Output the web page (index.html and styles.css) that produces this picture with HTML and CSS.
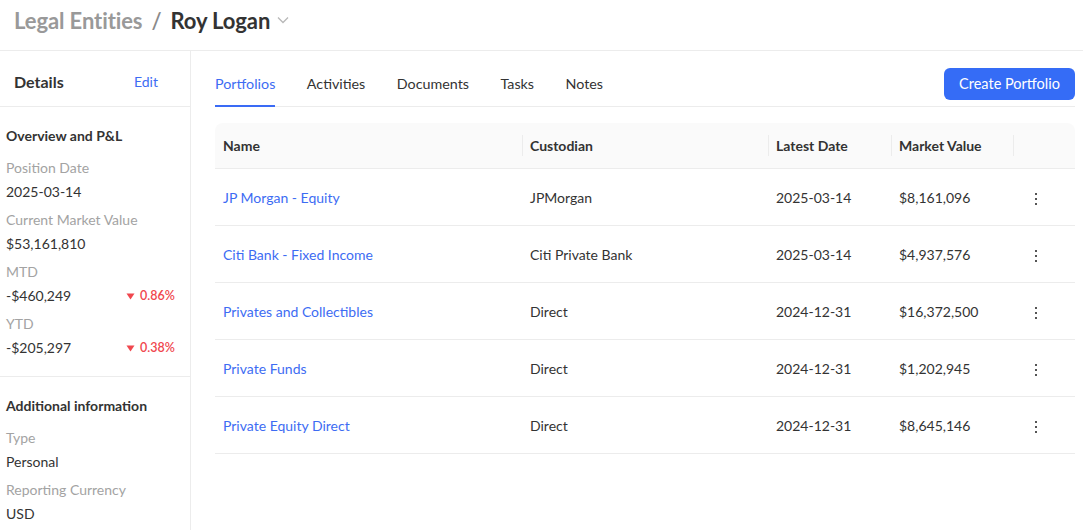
FILE: index.html
```html
<!DOCTYPE html>
<html lang="en">
<head>
<meta charset="utf-8">
<title>Roy Logan</title>
<link rel="stylesheet" href="styles.css">
</head>
<body>
<header class="topbar">
  <h1 class="crumbs">
    <span class="crumb-parent">Legal Entities</span>
    <span class="crumb-sep">/</span>
    <span class="crumb-current">Roy Logan</span>
    <svg class="crumb-chevron" width="14" height="14" viewBox="0 0 14 14"><path d="M2 4.5 L7 9.5 L12 4.5" fill="none" stroke="#b8b8b8" stroke-width="1.3"/></svg>
  </h1>
</header>
<div class="layout">
  <aside class="sidebar">
    <div class="side-head">
      <span class="side-title">Details</span>
      <a class="side-edit">Edit</a>
    </div>
    <section class="side-section">
      <h2 class="section-title">Overview and P&amp;L</h2>
      <div class="field">
        <div class="label">Position Date</div>
        <div class="value">2025-03-14</div>
      </div>
      <div class="field">
        <div class="label">Current Market Value</div>
        <div class="value">$53,161,810</div>
      </div>
      <div class="field">
        <div class="label">MTD</div>
        <div class="value split"><span>-$460,249</span><span class="change"><svg width="9" height="7" viewBox="0 0 9 7"><path d="M0.5 0.5 H8.5 L4.5 6.5 Z" fill="#f0474e"/></svg>0.86%</span></div>
      </div>
      <div class="field">
        <div class="label">YTD</div>
        <div class="value split"><span>-$205,297</span><span class="change"><svg width="9" height="7" viewBox="0 0 9 7"><path d="M0.5 0.5 H8.5 L4.5 6.5 Z" fill="#f0474e"/></svg>0.38%</span></div>
      </div>
    </section>
    <section class="side-section last">
      <h2 class="section-title">Additional information</h2>
      <div class="field">
        <div class="label">Type</div>
        <div class="value">Personal</div>
      </div>
      <div class="field">
        <div class="label">Reporting Currency</div>
        <div class="value">USD</div>
      </div>
    </section>
  </aside>
  <main class="main">
    <div class="tabbar">
      <nav class="tabs">
        <a class="tab active">Portfolios</a>
        <a class="tab">Activities</a>
        <a class="tab">Documents</a>
        <a class="tab">Tasks</a>
        <a class="tab">Notes</a>
      </nav>
      <button class="btn-primary">Create Portfolio</button>
    </div>
    <table class="grid">
      <colgroup>
        <col class="c-name"><col class="c-cust"><col class="c-date"><col class="c-mv"><col class="c-act">
      </colgroup>
      <thead>
        <tr>
          <th>Name</th>
          <th><span class="sep"></span>Custodian</th>
          <th><span class="sep"></span>Latest Date</th>
          <th><span class="sep"></span>Market Value</th>
          <th><span class="sep"></span></th>
        </tr>
      </thead>
      <tbody>
        <tr><td><a class="link">JP Morgan - Equity</a></td><td>JPMorgan</td><td>2025-03-14</td><td>$8,161,096</td><td class="act"><span class="dots"><i></i><i></i><i></i></span></td></tr>
        <tr><td><a class="link">Citi Bank - Fixed Income</a></td><td>Citi Private Bank</td><td>2025-03-14</td><td>$4,937,576</td><td class="act"><span class="dots"><i></i><i></i><i></i></span></td></tr>
        <tr><td><a class="link">Privates and Collectibles</a></td><td>Direct</td><td>2024-12-31</td><td>$16,372,500</td><td class="act"><span class="dots"><i></i><i></i><i></i></span></td></tr>
        <tr><td><a class="link">Private Funds</a></td><td>Direct</td><td>2024-12-31</td><td>$1,202,945</td><td class="act"><span class="dots"><i></i><i></i><i></i></span></td></tr>
        <tr><td><a class="link">Private Equity Direct</a></td><td>Direct</td><td>2024-12-31</td><td>$8,645,146</td><td class="act"><span class="dots"><i></i><i></i><i></i></span></td></tr>
      </tbody>
    </table>
  </main>
</div>
</body>
</html>
```
FILE: styles.css
```css
* { box-sizing: border-box; }
html, body { margin: 0; padding: 0; }
body {
  font-family: Lato, "Open Sans", sans-serif;
  font-size: 14px;
  color: #333;
  background: #fff;
  height: 530px;
  overflow: hidden;
}
a { cursor: pointer; }

.topbar {
  height: 51px;
  border-bottom: 1px solid #ececec;
  padding: 0 14px;
  display: flex;
  align-items: flex-start;
}
.crumbs {
  margin: 0;
  height: 41px;
  display: flex;
  align-items: center;
  font-size: 22px;
  font-weight: 700;
  letter-spacing: -0.1px;
}
.crumb-parent { color: #999; }
.crumb-sep { color: #8a8a8a; margin: 0 9px; font-weight: 600; }
.crumb-current { color: #333; }
.crumb-chevron { margin-left: 6px; margin-top: -2px; }

.layout {
  display: flex;
  height: 479px;
}
.sidebar {
  width: 191px;
  flex: none;
  border-right: 1px solid #ececec;
}
.side-head {
  height: 56px;
  border-bottom: 1px solid #ececec;
  display: flex;
  align-items: center;
  justify-content: space-between;
  padding: 6px 32px 0 14px;
}
.side-title { font-size: 16px; font-weight: 700; color: #333; }
.side-edit { color: #3d6cf3; font-size: 14px; }

.side-section {
  padding: 17px 16px 16px 6px;
  border-bottom: 1px solid #ececec;
}
.side-section.last { border-bottom: none; }
.section-title {
  margin: 0 0 8px;
  font-size: 14px;
  font-weight: 700;
  line-height: 24px;
  color: #333;
}
.field { margin-bottom: 4px; }
.field:last-child { margin-bottom: 0; }
.label { color: #a3a3a3; line-height: 24px; }
.value { line-height: 24px; color: #333; }
.value.split {
  display: grid;
  grid-template-columns: 120px auto;
  align-items: center;
}
.change {
  color: #f0474e;
  font-size: 12.5px;
  font-weight: 600;
  display: flex;
  align-items: center;
  gap: 5px;
}

.main {
  flex: 1;
  padding: 0 8px 0 24px;
}
.tabbar {
  height: 56px;
  border-bottom: 1px solid #ececec;
  display: flex;
  align-items: center;
  justify-content: space-between;
  padding-top: 10px;
}
.tabs {
  display: flex;
  gap: 31.5px;
  height: 100%;
}
.tab {
  display: flex;
  align-items: center;
  color: #333;
  font-size: 14.3px;
  border-bottom: 2px solid transparent;
  margin-bottom: -1px;
}
.tab.active {
  color: #3d6cf3;
  border-bottom-color: #3a6bf5;
}
.btn-primary {
  font-family: Lato, sans-serif;
  font-size: 14.5px;
  color: #fff;
  background: #356cf6;
  border: none;
  border-radius: 6px;
  width: 131px;
  height: 32px;
  cursor: pointer;
}

.grid {
  margin-top: 16px;
  width: 860px;
  border-collapse: separate;
  border-spacing: 0;
  table-layout: fixed;
}
.c-name { width: 307px; }
.c-cust { width: 246px; }
.c-date { width: 123px; }
.c-mv { width: 122px; }
.c-act { width: 62px; }
.grid th {
  background: #fafafa;
  height: 46px;
  text-align: left;
  font-weight: 700;
  color: #333;
  padding: 0 8px;
  border-bottom: 1px solid #ececec;
  position: relative;
}
.grid th:first-child { border-top-left-radius: 8px; }
.grid th:last-child { border-top-right-radius: 8px; }
.sep {
  position: absolute;
  left: 0;
  top: 12px;
  bottom: 12px;
  width: 1px;
  background: #ececec;
}
.grid td {
  height: 57px;
  padding: 0 8px;
  border-bottom: 1px solid #ececec;
  color: #333;
  white-space: nowrap;
}
.link { color: #3d6cf3; }
.grid td.act { padding-left: 22px; }
.dots {
  display: inline-flex;
  flex-direction: column;
  gap: 3px;
  vertical-align: middle;
}
.dots i {
  display: block;
  width: 2px;
  height: 2px;
  background: #555;
}
```
